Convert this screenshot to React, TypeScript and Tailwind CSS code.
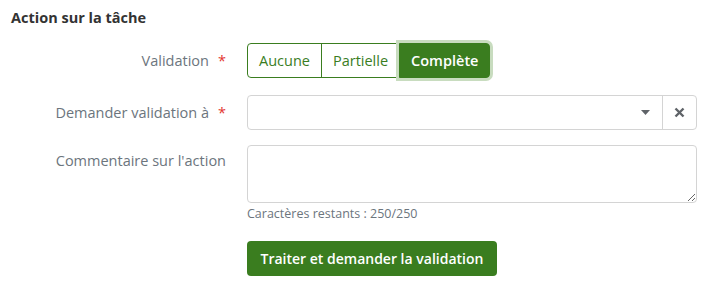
import React from 'react'

const App = () => {
  const [validation, setValidation] = React.useState<string>('Complète')
  const options = ['Aucune', 'Partielle', 'Complète']

  return (
    <div className="w-[707px] h-[291px] bg-white text-[14.5px] font-['Open_Sans',sans-serif] text-[#333]">
      <h3 className="pl-[11px] pt-[8px] text-[14.5px] font-bold leading-[20px] text-[#333]">Action sur la tâche</h3>

      <div className="grid grid-cols-[226px_450px] gap-x-[21px] mt-[15px]">
        {/* Validation */}
        <label className="flex items-center justify-end h-[35px] text-[#6c757d]">
          Validation <span className="ml-[9px] text-[#e3342f]">*</span>
        </label>
        <div className="flex h-[35px]">
          <div className="flex">
            {options.map((o, i) => {
              const active = o === validation
              return (
                <button
                  key={o}
                  onClick={() => setValidation(o)}
                  className={`h-[35px] px-[11px] border border-[#3a7d1f] ${i > 0 ? '-ml-px' : ''} ${i === 0 ? 'rounded-l-[4px]' : ''} ${i === options.length - 1 ? 'rounded-r-[4px]' : ''} ${active ? 'bg-[#3a7d1f] text-white font-semibold shadow-[0_0_0_3px_#c8dcbf]' : 'bg-white text-[#3a7d1f]'}`}
                >
                  {o}
                </button>
              )
            })}
          </div>
        </div>

        {/* Demander validation */}
        <label className="flex items-center justify-end h-[35px] mt-[17px] text-[#6c757d]">
          Demander validation à <span className="ml-[9px] text-[#e3342f]">*</span>
        </label>
        <div className="flex h-[35px] mt-[17px] border border-[#d4d4d4] rounded-[4px]">
          <div className="flex-1 flex items-center justify-end pr-[12px]">
            <svg width="9" height="5" viewBox="0 0 9 5"><path d="M0 0h9L4.5 5z" fill="#5f6368" /></svg>
          </div>
          <div className="w-[34px] border-l border-[#d4d4d4] flex items-center justify-center">
            <svg width="11" height="11" viewBox="0 0 11 11"><path d="M1.5 1.5l8 8M9.5 1.5l-8 8" stroke="#5f6368" strokeWidth="2.4" /></svg>
          </div>
        </div>

        {/* Commentaire */}
        <label className="flex justify-end pt-[5px] mt-[15px] text-[#6c757d]">Commentaire sur l'action</label>
        <div className="mt-[15px]">
          <textarea className="block w-full h-[58px] border border-[#d4d4d4] rounded-[4px] resize-y" />
          <p className="text-[12.5px] text-[#6c757d] mt-[3px] leading-[16px]">Caractères restants : 250/250</p>
        </div>

        <div />
        <div className="mt-[19px]">
          <button className="h-[35px] px-[13.5px] rounded-[4px] bg-[#3a7d1f] text-white text-[14px] font-semibold">
            Traiter et demander la validation
          </button>
        </div>
      </div>
    </div>
  )
}

export default App
